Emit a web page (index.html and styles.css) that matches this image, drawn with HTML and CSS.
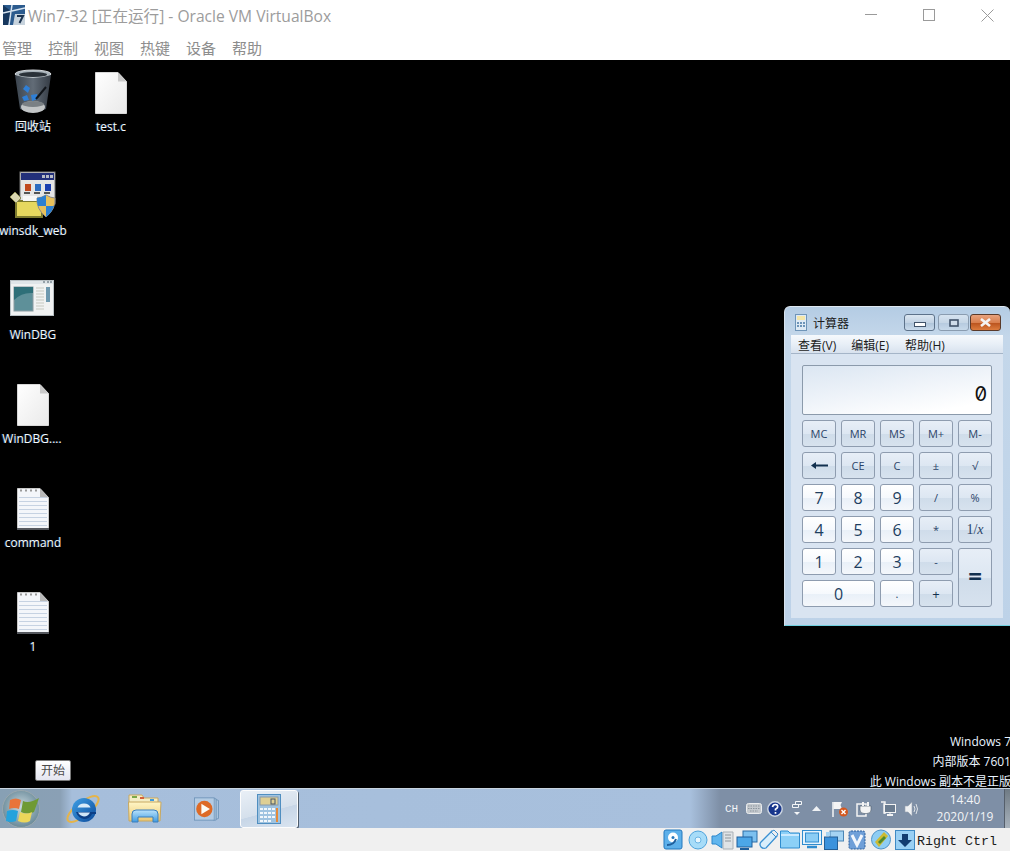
FILE: index.html
```html
<!DOCTYPE html>
<html lang="zh">
<head>
<meta charset="utf-8">
<title>Win7-32 [正在运行] - Oracle VM VirtualBox</title>
<link rel="stylesheet" href="styles.css">
</head>
<body>
<svg class="defs" width="0" height="0" aria-hidden="true">
  <defs>
    <linearGradient id="pageGrad" x1="0" y1="0" x2="1" y2="1"><stop offset="0" stop-color="#ffffff"/><stop offset="1" stop-color="#e9e9e9"/></linearGradient>
    <linearGradient id="binGrad" x1="0" y1="0" x2="1" y2="0"><stop offset="0" stop-color="#3a434d"/><stop offset=".5" stop-color="#626c77"/><stop offset="1" stop-color="#343b44"/></linearGradient>
    <radialGradient id="orbGrad" cx=".5" cy=".45" r=".6"><stop offset="0" stop-color="#c9d8df"/><stop offset="1" stop-color="#5f8292"/></radialGradient>
    <linearGradient id="folderGrad" x1="0" y1="0" x2="0" y2="1"><stop offset="0" stop-color="#fff6c6"/><stop offset="1" stop-color="#ecc873"/></linearGradient>
    <linearGradient id="blueGrad" x1="0" y1="0" x2="0" y2="1"><stop offset="0" stop-color="#b9e2fb"/><stop offset="1" stop-color="#3f9be0"/></linearGradient>
    <linearGradient id="ieGrad" x1="0" y1="0" x2="1" y2="1"><stop offset="0" stop-color="#3fa0e6"/><stop offset="1" stop-color="#0c4a9a"/></linearGradient>
    <symbol id="blankfile" viewBox="0 0 32 42">
      <path d="M0.5 0.5H23L31.5 9.5V41.5H0.5Z" fill="url(#pageGrad)" stroke="#d8d8d8"/>
      <path d="M23 0.5V9.5H31.5Z" fill="#c9c9c9"/>
    </symbol>
    <symbol id="textfile" viewBox="0 0 32 42">
      <path d="M0.5 0.5H23L31.5 9.5V41.5H0.5Z" fill="#f4f6fa" stroke="#c8c8c8"/>
      <path d="M23 0.5V9.5H31.5Z" fill="#b9b9b9"/>
      <path d="M2 9.5H30M2 13.5H30M2 17.5H30M2 21.5H30M2 25.5H30M2 29.5H30M2 33.5H30M2 37.5H30" stroke="#c6d2e2"/>
      <path d="M3 2.5h2M8 2.5h2M13 2.5h2M18 2.5h2" stroke="#9a9a9a" stroke-width="2"/>
      <rect x="0" y="40" width="32" height="2" fill="#55585e"/>
    </symbol>
  </defs>
</svg>
<div class="vbox">
  <header class="titlebar">
    <svg class="app-logo" width="22" height="20" viewBox="0 0 22 20">
      <rect width="22" height="20" fill="#2c5b8e"/>
      <path d="M0 0L9 7L5 20H0Z" fill="#17385e"/>
      <path d="M0 8L22 3M9 0L6 20" stroke="#d7e4f0" stroke-width="1.5"/>
      <path d="M12 9H22V20H10Z" fill="#c7d3dd"/>
      <path d="M14 11H20L16.500 18" fill="none" stroke="#1b3350" stroke-width="2"/>
    </svg>
    <span class="app-title">Win7-32 [正在运行] - Oracle VM VirtualBox</span>
    <div class="win-controls">
      <svg width="12" height="12" viewBox="0 0 12 12" class="ctl-min"><path d="M0 5.500H12" stroke="#9a9a9a"/></svg>
      <svg width="12" height="12" viewBox="0 0 12 12" class="ctl-max"><rect x=".5" y=".5" width="11" height="11" fill="none" stroke="#9a9a9a"/></svg>
      <svg width="13" height="13" viewBox="0 0 13 13" class="ctl-close"><path d="M.5 .5L12.500 12.500M12.500 .5L.5 12.500" stroke="#9a9a9a"/></svg>
    </div>
  </header>
  <nav class="menubar">
    <span>管理</span><span>控制</span><span>视图</span><span>热键</span><span>设备</span><span>帮助</span>
  </nav>
  <main class="screen">
    <section class="desktop">
      <div class="desk-icon di-bin">
        <svg width="38" height="46" viewBox="0 0 38 46">
          <ellipse cx="19" cy="5" rx="18" ry="4" fill="#a7b1b8" stroke="#d2d6da"/>
          <ellipse cx="19" cy="5.500" rx="14" ry="2.500" fill="#2a3138"/>
          <path d="M1 6L6 40Q19 47 32 40L37 6Q19 12 1 6Z" fill="url(#binGrad)"/>
          <ellipse cx="19" cy="38" rx="12" ry="6" fill="#c2c5c6"/>
          <ellipse cx="19" cy="35" rx="11" ry="3" fill="#7a8084"/>
          <path d="M9 20l3 -4l4 3l-2 5zM8 28l5 -2l2 5l-5 1zM17 26l6 -1l1 5l-6 2z" fill="#2f7fd6"/>
          <path d="M22 30L32 18" stroke="#11151a" stroke-width="2"/>
        </svg>
        <span>回收站</span>
      </div>
      <div class="desk-icon di-test">
        <svg width="32" height="42"><use href="#blankfile"/></svg>
        <span>test.c</span>
      </div>
      <div class="desk-icon di-sdk">
        <svg width="46" height="47" viewBox="0 0 46 47">
          <rect x="10" y="1" width="35" height="32" fill="#e5e5e5" stroke="#777"/>
          <rect x="11" y="2" width="33" height="7" fill="#23307a"/>
          <path d="M32 4h3v3h-3zM36 4h3v3h-3zM40 4h3v3h-3z" fill="#b8bcc6"/>
          <rect x="15" y="13" width="6" height="7" fill="#c0481e"/>
          <rect x="25" y="13" width="6" height="7" fill="#2c6cc0"/>
          <rect x="35" y="13" width="6" height="7" fill="#1b3fb0"/>
          <path d="M14 22h6M24 22h6M34 22h6" stroke="#555" stroke-width="2"/>
          <path d="M6 30H32V46H6Z" fill="#e6d85f" stroke="#7c7a2e" stroke-width="2"/>
          <rect x="13" y="25" width="14" height="5" fill="#f7f7f7"/>
          <path d="M5 21l6 6l-5 5l-6 -6z" fill="#d9d6b0" stroke="#8a8a50"/>
          <path d="M36 24Q41 27 45 27Q46 38 36 46Q26 38 27 27Q31 27 36 24Z" fill="#e8c15c" stroke="#8b8b8b"/>
          <path d="M36 24Q31 27 27 27Q26.600 31 28 35H36Z" fill="#2e80d0"/>
          <path d="M36 35H44Q41.600 42 36 46Z" fill="#2e80d0"/>
        </svg>
        <span>winsdk_web</span>
      </div>
      <div class="desk-icon di-dbg">
        <svg width="44" height="36" viewBox="0 0 44 36">
          <rect x=".5" y=".5" width="43" height="35" fill="#f0f2f2" stroke="#b8c0c4"/>
          <rect x="1" y="1" width="42" height="3" fill="#dfe5e8"/>
          <path d="M33 2h2M37 2h2M40 2h2" stroke="#7e8a92" stroke-width="1.500"/>
          <rect x="4" y="7" width="19" height="24" fill="#5e9099" stroke="#8a9aa0"/>
          <path d="M4 7H23V13Q12 12 4 20Z" fill="#2e6f78"/>
          <path d="M26 8h8M26 11h8M26 14h8M26 17h8M26 20h8M26 23h8M26 26h8M26 29h8" stroke="#c6c9c0"/>
          <rect x="36" y="7" width="4" height="15" fill="#6d98ae"/>
        </svg>
        <span>WinDBG</span>
      </div>
      <div class="desk-icon di-dbg2">
        <svg width="32" height="42"><use href="#blankfile"/></svg>
        <span>WinDBG....</span>
      </div>
      <div class="desk-icon di-cmd">
        <svg width="32" height="42"><use href="#textfile"/></svg>
        <span>command</span>
      </div>
      <div class="desk-icon di-one">
        <svg width="32" height="42"><use href="#textfile"/></svg>
        <span>1</span>
      </div>

      <article class="calc">
        <div class="calc-title">
          <svg width="12" height="17" viewBox="0 0 12 17">
            <rect x=".5" y=".5" width="11" height="16" fill="#dfeaf5" stroke="#6f95b8"/>
            <rect x="2" y="2" width="8" height="4" fill="#f4e6a8"/>
            <path d="M2 8h2v2H2zM5 8h2v2H5zM8 8h2v2H8zM2 11h2v2H2zM5 11h2v2H5zM8 11h2v2H8z" fill="#6d94b8"/>
          </svg>
          <span class="calc-name">计算器</span>
          <div class="calc-ctl">
            <button class="cb cb-min" type="button"><svg width="12" height="5"><rect x=".5" y=".5" width="11" height="4" fill="#fff" stroke="#41536a"/></svg></button>
            <button class="cb cb-max" type="button"><svg width="10" height="8"><rect x="1" y="1" width="8" height="6" fill="#cfdcea" stroke="#41536a" stroke-width="1.600"/></svg></button>
            <button class="cb cb-close" type="button"><svg width="13" height="9" viewBox="0 0 13 9"><path d="M2 1L11 8M11 1L2 8" stroke="#f4f4f4" stroke-width="2.600"/></svg></button>
          </div>
        </div>
        <div class="calc-client">
          <div class="calc-menu"><span>查看(V)</span><span>编辑(E)</span><span>帮助(H)</span></div>
          <div class="calc-body">
            <div class="calc-display">0</div>
            <div class="keys">
              <button class="key op" type="button">MC</button>
              <button class="key op" type="button">MR</button>
              <button class="key op" type="button">MS</button>
              <button class="key op" type="button">M+</button>
              <button class="key op" type="button">M-</button>
              <button class="key op" type="button"><svg width="17" height="7" viewBox="0 0 17 7"><path d="M4 3.500H17" stroke="#12304f" stroke-width="2"/><path d="M0 3.500L5 0V7Z" fill="#12304f"/></svg></button>
              <button class="key op" type="button">CE</button>
              <button class="key op" type="button">C</button>
              <button class="key op" type="button">±</button>
              <button class="key op" type="button">√</button>
              <button class="key num" type="button">7</button>
              <button class="key num" type="button">8</button>
              <button class="key num" type="button">9</button>
              <button class="key op" type="button">/</button>
              <button class="key op" type="button">%</button>
              <button class="key num" type="button">4</button>
              <button class="key num" type="button">5</button>
              <button class="key num" type="button">6</button>
              <button class="key op" type="button">*</button>
              <button class="key op inv" type="button">1/<i>x</i></button>
              <button class="key num" type="button">1</button>
              <button class="key num" type="button">2</button>
              <button class="key num" type="button">3</button>
              <button class="key op" type="button">-</button>
              <button class="key op eq" type="button">=</button>
              <button class="key num zero" type="button">0</button>
              <button class="key num dot" type="button">.</button>
              <button class="key op plus" type="button">+</button>
            </div>
          </div>
        </div>
      </article>

      <div class="watermark">
        <p>Windows 7</p>
        <p>内部版本 7601</p>
        <p>此 Windows 副本不是正版</p>
      </div>
      <div class="tooltip">开始</div>
    </section>
    <footer class="taskbar">
      <div class="start">
        <svg width="40" height="40" viewBox="0 0 40 40">
          <circle cx="20" cy="20" r="18.500" fill="url(#orbGrad)" stroke="#9aa8ae"/>
          <path d="M9 11q6 -3 11 0l-2 9q-5 -2 -10 0z" fill="#e8743a"/>
          <path d="M22 12q6 3 16 -3l-5 14q-6 3 -13 0z" fill="#6f9a34"/>
          <path d="M6 22q6 -2 11 0l-2 10q-5 2 -10 0z" fill="#25a2dc"/>
          <path d="M19 23q6 3 12 0l-2 9q-5 3 -12 0z" fill="#ecd75a"/>
        </svg>
      </div>
      <div class="pin pin-ie">
        <svg width="34" height="34" viewBox="0 0 34 34">
          <ellipse cx="17" cy="17" rx="19" ry="7" transform="rotate(-38 17 17)" fill="none" stroke="#e5b44a" stroke-width="2"/>
          <circle cx="18" cy="18" r="12" fill="url(#ieGrad)"/>
          <path d="M11.500 15.500Q13 11.500 18 11.500Q23 11.500 24.500 15.500Z" fill="#d8ebf9"/>
          <path d="M10 20H30V22H26Q24 27 18 27Q12 26 10 20Z" fill="#0c3f86"/>
          <path d="M12 20.500H24Q22 24.500 18 24.500Q14 24 12 20.500Z" fill="#cfe6f8"/>
        </svg>
      </div>
      <div class="pin pin-folder">
        <svg width="34" height="30" viewBox="0 0 34 30">
          <path d="M1 1H14L16 4H30V10H1Z" fill="#f4edc4" stroke="#c8a860"/>
          <rect x="4" y="2" width="5" height="2" fill="#7ba949"/>
          <rect x="12" y="3" width="4" height="2" fill="#d6603a"/>
          <rect x="22" y="5" width="4" height="2" fill="#3f9be0"/>
          <path d="M0.500 8H33L32 27H1Z" fill="url(#folderGrad)" stroke="#c8a860"/>
          <path d="M4 28V20Q4 16 8 16H26Q30 16 30 20V28H25V23H10V28Z" fill="url(#blueGrad)" stroke="#3a7fbd"/>
        </svg>
      </div>
      <div class="pin pin-wmp">
        <svg width="27" height="24" viewBox="0 0 30 28">
          <path d="M26 3L29 4V25L26 26Z" fill="#a9c4de" stroke="#6d93b8"/>
          <path d="M23 2H26V27H23Z" fill="#c1d6ea" stroke="#6d93b8"/>
          <rect x="1" y="1" width="23" height="26" fill="#b3cbe3" stroke="#6d93b8"/>
          <circle cx="12.500" cy="14" r="9.500" fill="#dd6a26"/>
          <path d="M9 8L19 14L9 20Z" fill="#fbfbf5"/>
        </svg>
      </div>
      <div class="pin-active">
        <svg width="24" height="30" viewBox="0 0 24 30">
          <rect x=".5" y=".5" width="23" height="29" fill="#9fc3e0" stroke="#4f8ec0"/>
          <rect x="3" y="3" width="18" height="8" fill="#dfcf93" stroke="#8a9aa8"/>
          <rect x="14" y="5" width="4" height="5" fill="none" stroke="#44566a"/>
          <path d="M3 14h3v2H3zM7 14h3v2H7zM11 14h3v2h-3zM15 14h3v2h-3zM3 18h3v2H3zM7 18h3v2H7zM11 18h3v2h-3zM15 18h3v2h-3zM3 22h3v2H3zM7 22h3v2H7zM11 22h3v2h-3zM15 22h3v2h-3zM3 26h3v2H3zM7 26h3v2H7zM11 26h3v2h-3z" fill="#f2f7fb"/>
          <rect x="19" y="14" width="2" height="14" fill="#e58a38"/>
        </svg>
      </div>
      <div class="tray">
        <span class="tray-ch">CH</span>
        <svg width="16" height="11" viewBox="0 0 16 11"><rect x=".5" y=".5" width="15" height="10" rx="2" fill="#c4c9ce" stroke="#eaecee"/><path d="M2 3h12M2 5.500h12M4 8h8" stroke="#8b949d" stroke-dasharray="1.500 1"/></svg>
        <svg width="16" height="16" viewBox="0 0 16 16"><circle cx="8" cy="8" r="7.200" fill="#18368c" stroke="#cdd6e2" stroke-width="1.400"/><path d="M5.500 6Q6 3.500 8.300 3.500Q11 3.500 10.600 6Q10.300 7.300 8.500 8.300V9.500M8.500 11v1.700" fill="none" stroke="#fff" stroke-width="1.700"/></svg>
        <svg width="10" height="16" viewBox="0 0 10 16"><path d="M3.500 .5h6v3h-6zM.5 3.500h6v3h-6z" fill="#76889f" stroke="#f4f6f8"/><path d="M2 11h6l-3 3z" fill="#f4f6f8"/></svg>
        <svg width="9" height="5" viewBox="0 0 9 5"><path d="M0 5L4.500 0L9 5Z" fill="#eef1f4"/></svg>
        <svg width="16" height="16" viewBox="0 0 16 16"><path d="M1 1V16" stroke="#f6f6f6" stroke-width="1.500"/><path d="M1.500 1H10L8.500 4L10 8H1.500Z" fill="#f4f4f4"/><circle cx="11.500" cy="11" r="4.500" fill="#d4581f"/><path d="M9.500 9L13.500 13M13.500 9L9.500 13" stroke="#fff" stroke-width="1.400"/></svg>
        <svg width="16" height="16" viewBox="0 0 16 16"><path d="M1 3H10V15H1Z" fill="none" stroke="#f4f4f4" stroke-width="1.500"/><path d="M4 5H15V9Q15 12.500 11 12.500H8Q4 12.500 4 9Z" fill="#f4f4f4" stroke="#4a5a6c" stroke-width=".6"/><path d="M7 1V5M12 1V5" stroke="#f4f4f4" stroke-width="2"/></svg>
        <svg width="16" height="16" viewBox="0 0 16 16"><path d="M1 1H5V3H4V12H5V13" fill="none" stroke="#f4f4f4" stroke-width="1.400"/><rect x="4.500" y="3.500" width="11" height="8" fill="#6b7c90" stroke="#f4f4f4"/><path d="M7 14h6" stroke="#f4f4f4" stroke-width="2"/><path d="M10 12v2" stroke="#f4f4f4"/></svg>
        <svg width="16" height="16" viewBox="0 0 16 16"><path d="M1 5H4L8 1V15L4 11H1Z" fill="#eef0f2" stroke="#97a3b0" stroke-width=".6"/><path d="M10 5Q12 8 10 11M12 3Q15 8 12 13" fill="none" stroke="#dfe3e7"/></svg>
        <div class="clock"><time>14:40</time><time>2020/1/19</time></div>
        <div class="show-desktop"></div>
      </div>
    </footer>
  </main>
  <footer class="statusbar">
    <div class="status-icons">
      <svg width="20" height="21" viewBox="0 0 20 21"><rect x="1" y="1" width="18" height="19" rx="2" fill="#5db0ea" stroke="#2578bd"/><circle cx="10" cy="8.500" r="5" fill="#fff"/><circle cx="10" cy="8.500" r="1.500" fill="#2578bd"/><path d="M4 16q7 0 9 -6" fill="none" stroke="#1f5f9c" stroke-width="2"/></svg>
      <svg width="20" height="20" viewBox="0 0 20 20"><circle cx="10" cy="10" r="9" fill="#a7dcf8" stroke="#4da3dc"/><circle cx="10" cy="10" r="3" fill="#e8f6fd" stroke="#6ab4e4"/></svg>
      <svg width="24" height="20" viewBox="0 0 24 20"><path d="M1 6H5L11 2V18L5 14H1Z" fill="#62b6ee" stroke="#2a86cc"/><path d="M12 2H22V19H12Z" fill="#dfe3e6" stroke="#a9b0b6"/><path d="M14 5h6M14 8h6M14 11h6" stroke="#8f969c"/></svg>
      <svg width="22" height="20" viewBox="0 0 22 20"><rect x="7" y="1" width="14" height="11" fill="#7cc0ef" stroke="#2a6ca6"/><rect x="1" y="7" width="15" height="10" fill="#4ca7e8" stroke="#1f5f9c"/><path d="M4 19h9" stroke="#1f5f9c" stroke-width="2"/></svg>
      <svg width="21" height="21" viewBox="0 0 21 21"><path d="M14 2L19 7L8 19Q5 20 3 18Q1 15 3 13Z" fill="#d9eefb" stroke="#3a90d2" stroke-width="1.300"/><path d="M13 3L18 8L20 5L16 1Z" fill="#eee" stroke="#3a90d2"/></svg>
      <svg width="20" height="19" viewBox="0 0 20 19"><path d="M.5 1H8L10 3H19.500V18H.5Z" fill="#8cd0f7" stroke="#2f8ccf"/><path d="M1 5H19" stroke="#cbeaff" stroke-width="2"/></svg>
      <svg width="20" height="19" viewBox="0 0 20 19"><rect x=".5" y=".5" width="19" height="14" fill="#e5f3fc" stroke="#2f8ccf"/><rect x="3.500" y="3" width="13" height="9" fill="#8bcdf5" stroke="#2f8ccf"/><path d="M5 17H15" stroke="#2f8ccf" stroke-width="2.500"/></svg>
      <svg width="20" height="20" viewBox="0 0 20 20"><rect x="6" y="1" width="13.500" height="10" fill="#a4d3f3" stroke="#4c85b4"/><rect x=".5" y="7" width="13" height="12.500" fill="#3b92dc" stroke="#235f97"/><rect x="2" y="2" width="4" height="4" fill="#a4d3f3"/></svg>
      <svg width="18" height="20" viewBox="0 0 18 20"><rect x="1" y="1" width="16" height="18" rx="2" fill="#6f9fd8" stroke="#2d5f9c" stroke-dasharray="2 1"/><path d="M4 5L9 15L14 5" fill="none" stroke="#f2f6fc" stroke-width="3"/></svg>
      <svg width="20" height="21" viewBox="0 0 20 21"><circle cx="10" cy="10.500" r="9.500" fill="#8ecdf3" stroke="#4f94c8"/><path d="M4 13L13 3L17 7L8 18Z" fill="#cdbb33"/><path d="M7 13L13 7L15 9L9 15Z" fill="#4d8a2e"/></svg>
      <svg width="20" height="20" viewBox="0 0 20 20"><rect x=".5" y=".5" width="19" height="19" fill="#9ad0f4" stroke="#3f8ac4"/><path d="M7 4H13V10H17L10 17L3 10H7Z" fill="#123c70"/></svg>
    </div>
    <span class="host-key">Right Ctrl</span>
  </footer>
</div>
</body>
</html>
```

FILE: styles.css
```css
* { box-sizing: border-box; }
html, body { margin: 0; padding: 0; }
body { font-family: "Open Sans", "Noto Sans CJK SC", sans-serif; background: #fff; overflow: hidden; }
.defs { position: absolute; }
svg { display: block; flex: none; }

.vbox { width: 1010px; height: 851px; display: flex; flex-direction: column; overflow: hidden; }

.titlebar { height: 33px; display: flex; align-items: center; padding: 0 0 3px 3px; background: #fff; }
.app-title { margin-left: 3px; font-size: 15.600px; color: #9c9c9c; white-space: nowrap; }
.win-controls { margin-left: auto; display: flex; align-items: center; }
.ctl-min { margin-right: 46px; }
.ctl-max { margin-right: 46px; }
.ctl-close { margin-right: 16px; }

.menubar { height: 27px; display: flex; gap: 16px; align-items: center; padding: 1px 0 0 2px; background: #fff; font-size: 15px; color: #8d8d8d; }

.screen { flex: 1; display: flex; flex-direction: column; background: #000; min-height: 0; }
.desktop { flex: 1; position: relative; overflow: hidden; }

.desk-icon { position: absolute; width: 76px; display: flex; flex-direction: column; align-items: center; color: #f4faff; font-size: 12px; line-height: 16px; white-space: nowrap; text-shadow: -1px 0 0 rgba(90,170,255,.35); }
.di-bin { left: -5px; top: 9px; }
.di-bin span { margin-top: 4px; }
.di-test { left: 73px; top: 12px; }
.di-test span { margin-top: 5px; }
.di-sdk { left: -5px; top: 111px; }
.di-sdk span { margin-top: 5px; }
.di-dbg { left: -5px; top: 220px; }
.di-dbg svg { margin-right: 2px; }
.di-dbg span { margin-top: 11px; }
.di-dbg2 { left: -6px; top: 324px; }
.di-dbg2 svg { margin-left: 2px; }
.di-dbg2 span { margin-top: 5px; }
.di-cmd { left: -5px; top: 428px; }
.di-cmd span { margin-top: 5px; }
.di-one { left: -5px; top: 532px; }
.di-one span { margin-top: 5px; }

.calc { position: absolute; left: 784px; top: 246px; width: 226px; height: 320px; padding: 0 7px 7px 6px; border-radius: 6px 6px 0 0; background: linear-gradient(180deg, #b4cce4 0, #c4d7ea 30px, #bdd2e8 100%); border: 1px solid #d7e3ee; border-top-color: #dfe8f1; border-bottom: 1px solid #6fd0e0; border-right: 0; display: flex; flex-direction: column; }
.calc-title { height: 28px; display: flex; align-items: center; padding: 3px 2px 0 4px; flex: none; }
.calc-name { margin-left: 6px; font-size: 12px; color: #1b1b1b; }
.calc-ctl { margin-left: auto; display: flex; gap: 1px; }
.cb { width: 31px; height: 17px; padding: 0; border: 1px solid #5d728a; border-radius: 3px; display: flex; align-items: center; justify-content: center; }
.cb-min { margin-right: 2px; background: linear-gradient(180deg, #dbe6f1 0, #c3d3e4 50%, #adc3d9 51%, #cadbec 100%); }
.cb-min svg { margin-top: 3px; }
.cb-max { background: linear-gradient(180deg, #d6e3f0 0, #c6d6e6 50%, #b5c9de 51%, #c7d9ea 100%); border-color: #8a9cb0; }
.cb-close { background: linear-gradient(180deg, #e8a27e 0, #d9804f 50%, #b8511c 51%, #dd7c3e 100%); border-color: #5a3a2a; }

.calc-client { flex: 1; display: flex; flex-direction: column; background: #d9e4f1; min-height: 0; }
.calc-menu { height: 19px; flex: none; display: flex; align-items: center; padding: 2px 0 0 7px; background: linear-gradient(180deg, #f6f9fc 0, #e8eff7 50%, #d8e2ee 100%); border-bottom: 1px solid #a5b5c8; font-size: 12px; color: #1b1b1b; }
.calc-menu span:nth-child(2) { margin-left: 15px; }
.calc-menu span:nth-child(3) { margin-left: 16px; }
.calc-body { flex: 1; padding: 11px 11px 0; }
.calc-display { height: 50px; border: 1px solid #8b9aab; border-radius: 2px; background: linear-gradient(170deg, #dbe6f2 0, #eef3f9 45%, #fff 85%); text-align: right; font-family: "Inter", sans-serif; font-variant-numeric: slashed-zero; font-feature-settings: "zero"; font-size: 20px; line-height: 56px; padding-right: 4px; color: #111; margin-bottom: 5px; }

.keys { display: grid; grid-template-columns: repeat(5, 34px); grid-auto-rows: 27px; gap: 5px; }
.key { padding: 0; border: 1px solid #8e9caf; border-radius: 3px; font-family: "Open Sans", sans-serif; display: flex; align-items: center; justify-content: center; }
.op { font-size: 11px; color: #2b4468; background: linear-gradient(180deg, #e7eef7 0, #dde7f2 50%, #cfdcea 52%, #d7e2ee 100%); }
.num { font-size: 16px; color: #1d3e60; background: linear-gradient(180deg, #ffffff 0, #f6f9fd 50%, #e9f0f8 52%, #f4f7fb 100%); }
.inv { font-family: "Liberation Serif", serif; font-size: 14px; }
.eq { grid-column: 5; grid-row: 5 / span 2; padding-bottom: 4px; font-size: 24px; font-weight: 700; color: #12304f; }
.zero { grid-column: 1 / span 2; }
.dot { font-size: 11px; }
.plus { font-size: 13px; color: #12304f; }

.watermark { position: absolute; right: -1px; bottom: -4px; color: #eaf4ff; font-size: 12px; line-height: 20px; text-align: right; white-space: nowrap; }
.watermark p { margin: 0; }

.tooltip { position: absolute; left: 35px; top: 700px; width: 36px; height: 21px; border: 1px solid #7a7a7a; border-radius: 2px; background: linear-gradient(180deg, #fff, #e4e5f0); color: #4a4a4a; font-size: 12px; line-height: 19px; text-align: center; }

.taskbar { height: 40px; flex: none; display: flex; align-items: center; background: linear-gradient(90deg, #87a0b4 0, #8aa0b5 60px, #a6bedb 72px, #a8c0dd 690px, #7e8fa6 720px, #7e8fa6 100%); border-top: 1px solid #c8d4e0; }
.start { width: 62px; padding-left: 1px; flex: none; }
.pin { flex: none; display: flex; justify-content: center; }
.pin-ie { width: 42px; }
.pin-folder { width: 82px; }
.pin-wmp { width: 40px; margin-right: 14px; }
.pin-active { width: 58px; height: 38px; flex: none; display: flex; align-items: center; justify-content: center; border: 1px solid #fdfdfd; border-radius: 3px; background: linear-gradient(165deg, #e9eff6 0, #d5e0ec 55%, #c7d6e7 56%, #d9e4f0 100%); box-shadow: 1px 1px 0 rgba(40,50,60,.7); }

.tray { margin-left: auto; width: 290px; height: 100%; display: grid; grid-template-columns: 26px 21px 25px 20px 20px 24px 24px 24px 24px 74px 8px; align-items: center; justify-items: start; }
.tray-ch { padding-left: 5px; font-family: "Liberation Mono", monospace; font-size: 11px; color: #f2f4f6; }
.clock { display: flex; flex-direction: column; align-items: center; justify-self: center; gap: 1px; color: #f2f4f6; font-size: 12px; line-height: 16px; }
.show-desktop { height: 100%; width: 6px; justify-self: end; background: linear-gradient(180deg, #6e7a84, #a9b3bd); border-left: 1px solid #555f6b; }

.statusbar { height: 23px; flex: none; display: flex; align-items: center; background: #f0f0f0; padding-left: 660px; }
.status-icons { display: grid; grid-template-columns: 25px 25px 25px 23px 21px 22px 22px 22px 24px 24px 23px; align-items: center; justify-items: center; }
.host-key { margin-left: 1px; padding-top: 3px; font-family: "Liberation Mono", monospace; font-size: 13.330px; color: #1b1b1b; white-space: nowrap; }
```
